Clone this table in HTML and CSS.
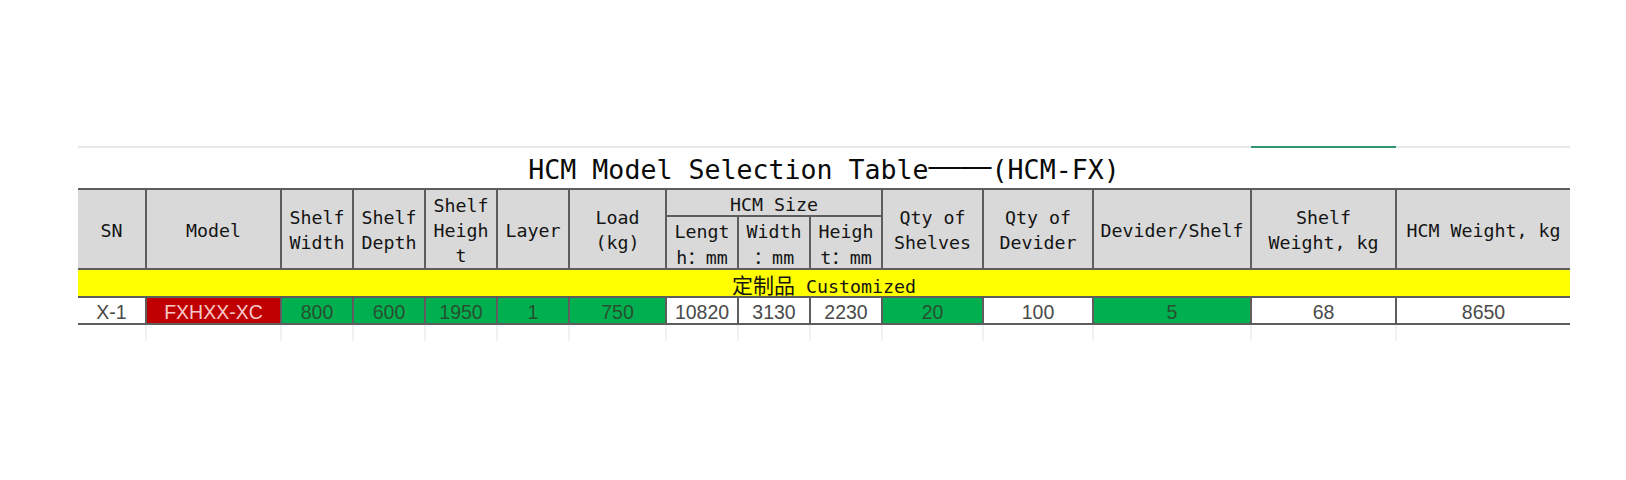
FILE: index.html
```html
<!DOCTYPE html>
<html lang="en">
<head>
<meta charset="utf-8">
<title>HCM Model Selection Table</title>
<link rel="stylesheet" href="styles.css">
</head>
<body>
<div class="page">
  <div class="topline"><div class="topline-active"></div></div>
  <div class="title">HCM Model Selection Table<span class="dash">——</span>(HCM-FX)</div>
  <div class="grid">
    <div class="hd tall">SN</div>
    <div class="hd tall">Model</div>
    <div class="hd tall">Shelf Width</div>
    <div class="hd tall">Shelf Depth</div>
    <div class="hd tall brk">Shelf Height</div>
    <div class="hd tall">Layer</div>
    <div class="hd tall">Load (kg)</div>
    <div class="hd group">HCM Size</div>
    <div class="hd tall">Qty of Shelves</div>
    <div class="hd tall">Qty of Devider</div>
    <div class="hd tall">Devider/Shelf</div>
    <div class="hd tall">Shelf Weight, kg</div>
    <div class="hd tall">HCM Weight, kg</div>
    <div class="hd sub brk">Length：mm</div>
    <div class="hd sub brk">Width：mm</div>
    <div class="hd sub brk">Height：mm</div>
    <div class="band"><span><span class="cjk">定制品</span> Customized</span></div>
    <div class="td">X-1</div>
    <div class="td red">FXHXX-XC</div>
    <div class="td green">800</div>
    <div class="td green">600</div>
    <div class="td green">1950</div>
    <div class="td green">1</div>
    <div class="td green">750</div>
    <div class="td">10820</div>
    <div class="td">3130</div>
    <div class="td">2230</div>
    <div class="td green">20</div>
    <div class="td">100</div>
    <div class="td green">5</div>
    <div class="td">68</div>
    <div class="td">8650</div>
  </div>
  <div class="faint">
    <div></div><div></div><div></div><div></div><div></div>
    <div></div><div></div><div></div><div></div><div></div>
    <div></div><div></div><div></div><div></div><div></div>
  </div>
</div>
</body>
</html>
```

FILE: styles.css
```css
html, body {
  margin: 0;
  padding: 0;
  background: #ffffff;
}

.page {
  padding: 146px 0 0 78px;
  width: 1492px;
}

.topline {
  height: 2px;
  background: #e8e8e8;
  display: flex;
}

.topline-active {
  margin-left: 1173px;
  width: 145px;
  background: #34966e;
}

.title {
  height: 40px;
  box-sizing: border-box;
  padding-top: 4px;
  line-height: 36px;
  text-align: center;
  font-family: "DejaVu Sans Mono", "Noto Sans CJK SC", monospace;
  font-size: 26.6px;
  color: #0a0a0a;
  white-space: nowrap;
}

.dash {
  font-family: "Liberation Sans", Arial, sans-serif;
  font-size: 31.5px;
  line-height: 0;
  position: relative;
  top: -3px;
}

.grid {
  display: grid;
  grid-template-columns: 67px 133px 70px 70px 70px 70px 95px 70px 70px 70px 99px 108px 156px 143px 173px;
  grid-template-rows: 25px 51px 26px 25px;
  gap: 2px;
  padding: 2px 0;
  background: #5d5d5d;
}

.hd {
  background: #d9d9d9;
  display: flex;
  align-items: center;
  justify-content: center;
  text-align: center;
  padding: 0 4px;
  font-family: "DejaVu Sans Mono", "Noto Sans CJK SC", monospace;
  font-size: 18.3px;
  line-height: 25px;
  color: #141414;
}

.tall {
  grid-row: span 2;
  padding-top: 2px;
}

.group {
  grid-column: span 3;
  padding-top: 3px;
  box-sizing: border-box;
}

.sub {
  padding-top: 5px;
  line-height: 26px;
  box-sizing: border-box;
}

.brk {
  word-break: break-all;
  line-break: anywhere;
}

.band {
  grid-column: 1 / -1;
  background: #ffff00;
  display: flex;
  align-items: center;
  justify-content: center;
  padding-top: 4px;
  font-family: "DejaVu Sans Mono", "Noto Sans CJK SC", monospace;
  font-size: 18.3px;
  color: #141414;
  white-space: nowrap;
}

.cjk {
  font-family: "Noto Sans CJK SC", sans-serif;
  font-size: 21px;
  line-height: 1;
}

.td {
  background: #ffffff;
  display: flex;
  align-items: center;
  justify-content: center;
  padding-top: 3px;
  font-family: "Liberation Sans", Arial, sans-serif;
  font-size: 19.5px;
  color: #4a4a4a;
  white-space: nowrap;
}

.green {
  background: #00b050;
  color: #26502f;
}

.red {
  background: #c00000;
  color: #f6c9c9;
}

.faint {
  display: grid;
  grid-template-columns: 67px 133px 70px 70px 70px 70px 95px 70px 70px 70px 99px 108px 156px 143px 173px;
  column-gap: 2px;
  height: 16px;
  background: #f1f1f1;
}

.faint > div {
  background: #ffffff;
}
```
